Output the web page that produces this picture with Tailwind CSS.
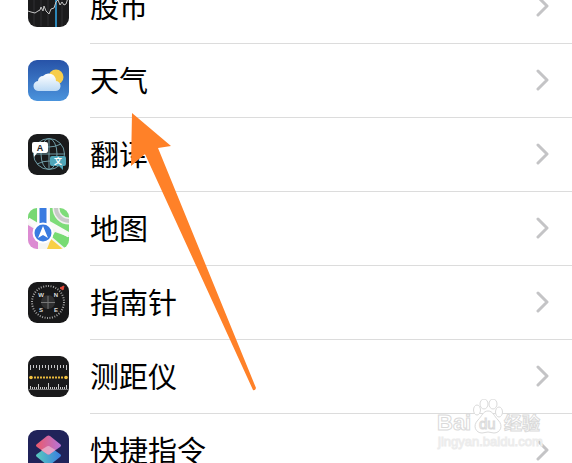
<!DOCTYPE html>
<html lang="zh-CN">
<head>
    <meta charset="UTF-8">
    <meta name="viewport" content="width=device-width, initial-scale=1.0">
    <title>设置</title>
    <script src="https://cdn.jsdelivr.net/npm/@tailwindcss/browser@4"></script>
</head>
<body class="bg-white text-black font-['Liberation_Sans','Noto_Sans_CJK_SC',sans-serif]">
    <main class="relative h-screen overflow-hidden">

        <ul class="-mt-[30px] text-[29px] leading-10">
            <li>
                <a href="#stocks" class="flex h-[74px] items-center gap-[21px] pl-7">
                    <svg class="mb-0.5 size-[41px] shrink-0" viewBox="0 0 41 41">
                        <rect width="41" height="41" rx="9" fill="#1b1b1c"/>
                        <path d="M6 1v39M13 1v39M20 1v39M34 1v39" stroke="#303032"/>
                        <path d="M28 0v41" stroke="#2b86b8" stroke-width="2"/>
                        <path d="M0 25l3 1 4 1 3-2 2-1 1-3 2 4 1-5 2 5 3 3 2-5 3-1 2-6 2-2 2 5 2-3 2 3 2-1 2-6 3-3" fill="none" stroke="#c4c4c4"/>
                    </svg>
                    <span class="flex h-full flex-1 items-center justify-between border-b border-[#dcdcdc] pt-0.5 pr-[23px]">
                        股市
                        <svg class="mb-1 h-6 w-4" viewBox="0 0 16 24" fill="none" stroke="#c4c4c6" stroke-width="3" stroke-linecap="round" stroke-linejoin="round"><path d="M5 3l9 9-9 9"/></svg>
                    </span>
                </a>
            </li>

            <li>
                <a href="#weather" class="flex h-[74px] items-center gap-[21px] pl-7">
                    <svg class="mb-0.5 size-[41px] shrink-0" viewBox="0 0 41 41">
                        <defs>
                            <linearGradient id="sky" x2="0" y2="1"><stop stop-color="#2753a8"/><stop offset="1" stop-color="#4a93dc"/></linearGradient>
                            <linearGradient id="cloud" x2="0" y2="1"><stop stop-color="#fff"/><stop offset="1" stop-color="#bcdaf5"/></linearGradient>
                        </defs>
                        <rect width="41" height="41" rx="9" fill="url(#sky)"/>
                        <circle cx="28" cy="17" r="7.500" fill="#f7cd4b"/>
                        <path d="M11 31a5 5 0 0 1-1-10 5 5 0 0 1 5-5 7.500 7.500 0 0 1 13 5A5 5 0 0 1 27 31z" fill="url(#cloud)"/>
                    </svg>
                    <span class="flex h-full flex-1 items-center justify-between border-b border-[#dcdcdc] pt-0.5 pr-[23px]">
                        天气
                        <svg class="mb-1 h-6 w-4" viewBox="0 0 16 24" fill="none" stroke="#c4c4c6" stroke-width="3" stroke-linecap="round" stroke-linejoin="round"><path d="M5 3l9 9-9 9"/></svg>
                    </span>
                </a>
            </li>

            <li>
                <a href="#translate" class="flex h-[74px] items-center gap-[21px] pl-7">
                    <svg class="mb-0.5 size-[41px] shrink-0" viewBox="0 0 41 41">
                        <rect width="41" height="41" rx="9" fill="#1a1b1c"/>
                        <g fill="none" stroke="#6f9ba5">
                            <circle cx="21" cy="20" r="15.500"/>
                            <ellipse cx="21" cy="20" rx="8" ry="15.500"/>
                            <path d="M21 4v32M5 20h32M9 10q12 6 24 0M9 30q12-6 24 0"/>
                        </g>
                        <path d="M6 8h12a2 2 0 0 1 2 2v7a2 2 0 0 1-2 2H9l-3 4v-4a2 2 0 0 1-2-2v-7a2 2 0 0 1 2-2z" fill="#fff"/>
                        <path d="M24 22h12a2 2 0 0 1 2 2v6a2 2 0 0 1-2 2h-1v4l-4-4h-7a2 2 0 0 1-2-2v-6a2 2 0 0 1 2-2z" fill="#4fa5b8"/>
                        <text x="12" y="17" font-size="9" font-weight="bold" text-anchor="middle" fill="#222">A</text>
                        <text x="30" y="30" font-size="8" font-weight="bold" text-anchor="middle" fill="#fff">文</text>
                    </svg>
                    <span class="flex h-full flex-1 items-center justify-between border-b border-[#dcdcdc] pt-0.5 pr-[23px]">
                        翻译
                        <svg class="mb-1 h-6 w-4" viewBox="0 0 16 24" fill="none" stroke="#c4c4c6" stroke-width="3" stroke-linecap="round" stroke-linejoin="round"><path d="M5 3l9 9-9 9"/></svg>
                    </span>
                </a>
            </li>

            <li>
                <a href="#maps" class="flex h-[74px] items-center gap-[21px] pl-7">
                    <svg class="mb-0.5 size-[41px] shrink-0" viewBox="0 0 41 41">
                        <clipPath id="tile"><rect width="41" height="41" rx="9"/></clipPath>
                        <g clip-path="url(#tile)">
                            <rect width="41" height="41" fill="#f5f5f2"/>
                            <path d="M0 0h9v16L0 11z" fill="#77d874"/>
                            <path d="M22 0h19v28L22 15z" fill="#7edc79"/>
                            <path d="M0 17l10 6v18H0z" fill="#dc8bd2"/>
                            <path d="M23 31l12 10H19z" fill="#f8cf46"/>
                            <path d="M27 24l14 5v12h-3L24 29z" fill="#78db73"/>
                            <circle cx="41" cy="0" r="13" fill="none" stroke="#f1f1ef" stroke-width="7"/>
                            <circle cx="41" cy="0" r="13" fill="none" stroke="#c9c9c9" stroke-width="4"/>
                            <path d="M0 12l10 6M20 15l21 12" stroke="#fafaf8" stroke-width="5"/>
                            <path d="M15 0v18" stroke="#fff" stroke-width="11"/>
                            <path d="M15 0v18" stroke="#397be0" stroke-width="7"/>
                            <circle cx="15" cy="25" r="10.500" fill="#fff"/>
                            <circle cx="15" cy="25" r="8.500" fill="#397be0"/>
                            <path d="M15 18l5 12-5-3-5 3z" fill="#fff"/>
                        </g>
                    </svg>
                    <span class="flex h-full flex-1 items-center justify-between border-b border-[#dcdcdc] pt-0.5 pr-[23px]">
                        地图
                        <svg class="mb-1 h-6 w-4" viewBox="0 0 16 24" fill="none" stroke="#c4c4c6" stroke-width="3" stroke-linecap="round" stroke-linejoin="round"><path d="M5 3l9 9-9 9"/></svg>
                    </span>
                </a>
            </li>

            <li>
                <a href="#compass" class="flex h-[74px] items-center gap-[21px] pl-7">
                    <svg class="mb-0.5 size-[41px] shrink-0" viewBox="0 0 41 41">
                        <rect width="41" height="41" rx="9" fill="#181819"/>
                        <circle cx="20" cy="20" r="16" fill="none" stroke="#a5a5a5" stroke-width="2" stroke-dasharray="1 1.500"/>
                        <circle cx="20" cy="20" r="7" fill="#303031"/>
                        <path d="M20 14v13M13 20.500h14" stroke="#777"/>
                        <path d="M32 6l4-2-1 4z" fill="#e84b3c" stroke="#e84b3c"/>
                        <g fill="#ddd" font-size="6" font-weight="bold" text-anchor="middle">
                            <text x="13" y="15">W</text>
                            <text x="28" y="15">N</text>
                            <text x="13" y="30">S</text>
                            <text x="28" y="30">E</text>
                        </g>
                    </svg>
                    <span class="flex h-full flex-1 items-center justify-between border-b border-[#dcdcdc] pt-0.5 pr-[23px]">
                        指南针
                        <svg class="mb-1 h-6 w-4" viewBox="0 0 16 24" fill="none" stroke="#c4c4c6" stroke-width="3" stroke-linecap="round" stroke-linejoin="round"><path d="M5 3l9 9-9 9"/></svg>
                    </span>
                </a>
            </li>

            <li>
                <a href="#measure" class="flex h-[74px] items-center gap-[21px] pl-7">
                    <svg class="mb-0.5 size-[41px] shrink-0" viewBox="0 0 41 41">
                        <rect width="41" height="41" rx="9" fill="#1a1a1b"/>
                        <g stroke="#c9c9c9">
                            <path d="M2.500 9v5M5.500 9v3M8.500 9v3M11.500 9v5M14.500 9v3M17.500 9v3M20.500 9v5M23.500 9v3M26.500 9v3M29.500 9v5M32.500 9v3M35.500 9v3M38.500 9v5"/>
                            <path d="M2.500 33v-3M4.500 33v-2M6.500 33v-2M8.500 33v-2M10.500 33v-5M12.500 33v-2M14.500 33v-2M16.500 33v-2M18.500 33v-2M20.500 33v-6M22.500 33v-2M24.500 33v-2M26.500 33v-2M28.500 33v-2M30.500 33v-5M32.500 33v-2M34.500 33v-2M36.500 33v-2M38.500 33v-4"/>
                            <path d="M1 33.500h39" stroke="#777"/>
                        </g>
                        <path d="M6 21.500h30" stroke="#e9b93e" stroke-width="2" stroke-dasharray="2 1"/>
                        <circle cx="3" cy="21.500" r="1.800" fill="#f5c443"/>
                        <circle cx="38" cy="21.500" r="1.800" fill="#f5c443"/>
                    </svg>
                    <span class="flex h-full flex-1 items-center justify-between border-b border-[#dcdcdc] pt-0.5 pr-[23px]">
                        测距仪
                        <svg class="mb-1 h-6 w-4" viewBox="0 0 16 24" fill="none" stroke="#c4c4c6" stroke-width="3" stroke-linecap="round" stroke-linejoin="round"><path d="M5 3l9 9-9 9"/></svg>
                    </span>
                </a>
            </li>

            <li>
                <a href="#shortcuts" class="flex h-[74px] items-center gap-[21px] pl-7">
                    <svg class="mb-0.5 size-[41px] shrink-0" viewBox="0 0 41 41">
                        <defs>
                            <linearGradient id="pink"><stop stop-color="#ec5a6b"/><stop offset="1" stop-color="#b574d8"/></linearGradient>
                            <linearGradient id="teal"><stop stop-color="#58c9bd"/><stop offset="1" stop-color="#397fe0"/></linearGradient>
                        </defs>
                        <rect width="41" height="41" rx="9" fill="#20235a"/>
                        <path d="M19 17q1.500-1 3 0l10 7q2 1.500 0 3l-10 8q-1.500 1-3 0L9 27q-2-1.500 0-3z" fill="url(#teal)"/>
                        <path d="M19 6q1.500-1 3 0l10 8q2 1.500 0 3l-10 7q-1.500 1-3 0L9 17q-2-1.500 0-3z" fill="url(#pink)"/>
                        <path d="M20.500 16q1 0 2 1l5 3-5.500 4q-1.500 1-3 0L13 20l5-3q1-1 2.500-1z" fill="#ecbcd3" opacity=".7"/>
                    </svg>
                    <span class="flex h-full flex-1 items-center justify-between border-b border-[#dcdcdc] pt-0.5 pr-[23px]">
                        快捷指令
                        <svg class="mb-1 h-6 w-4" viewBox="0 0 16 24" fill="none" stroke="#c4c4c6" stroke-width="3" stroke-linecap="round" stroke-linejoin="round"><path d="M5 3l9 9-9 9"/></svg>
                    </span>
                </a>
            </li>
        </ul>

        <!-- seta apontando para 天气 -->
        <svg class="pointer-events-none absolute top-[112px] left-[130px] h-[280px] w-[128px]" viewBox="0 0 128 280">
            <path d="M2 1l39 33-13 2 98 240q-1 3-3 2L15 42 1 54z" fill="#ff8128"/>
        </svg>

        <!-- marca d'agua -->
        <svg class="pointer-events-none absolute right-[24px] bottom-[8px] h-[56px] w-[112px]" viewBox="0 0 112 56" fill="#fff" stroke="#dadada">
            <ellipse cx="41" cy="11" rx="3.500" ry="5"/>
            <ellipse cx="48" cy="5" rx="4" ry="5"/>
            <ellipse cx="57" cy="5" rx="4" ry="5"/>
            <ellipse cx="63" cy="13" rx="3.500" ry="5"/>
            <path d="M52 12c5 0 6 5 10 9 6 6 2 13-4 13q-6-2-12 0c-6 0-10-7-4-13 4-4 5-9 10-9z"/>
            <text x="1" y="31" font-size="22" font-weight="bold">Bai</text>
            <text x="43" y="30" font-size="15">du</text>
            <text x="68" y="31" font-size="18" font-weight="bold">经验</text>
            <text x="2" y="47" font-size="13" stroke="#ececec">jingyan.baidu.com</text>
        </svg>
    </main>
</body>
</html>
